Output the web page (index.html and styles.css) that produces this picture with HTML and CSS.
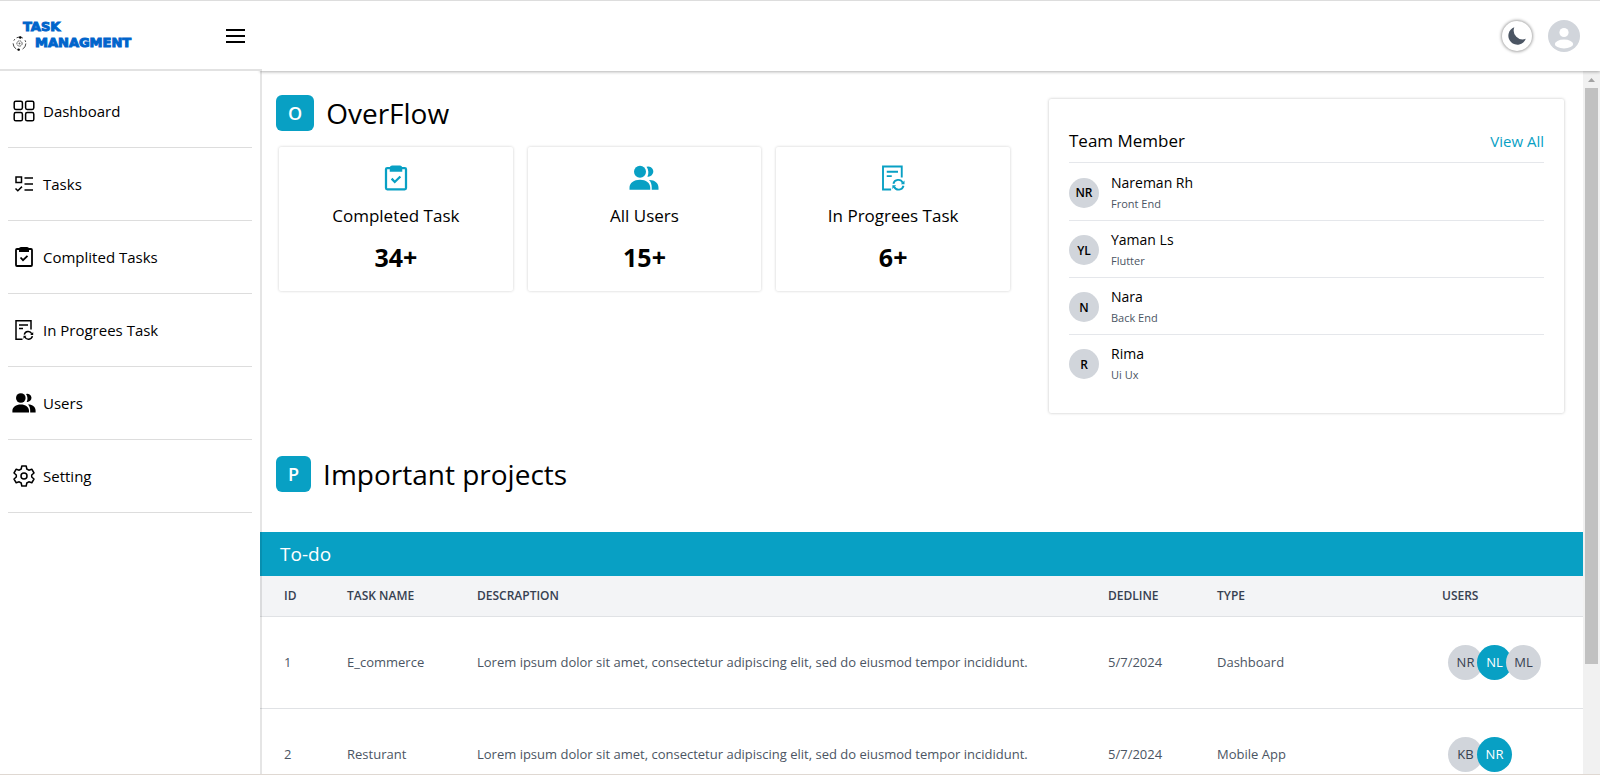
FILE: index.html
```html
<!DOCTYPE html>
<html lang="en">
<head>
<meta charset="utf-8">
<title>Task Managment</title>
<link rel="stylesheet" href="styles.css">
</head>
<body>
<svg class="sprite" aria-hidden="true">
  <symbol id="i-grid" viewBox="0 0 24 24"><g fill="none" stroke="currentColor" stroke-width="1.5"><rect x="2.2" y="2.2" width="8.2" height="8.2" rx="1.6"/><rect x="13.6" y="2.2" width="8.2" height="8.2" rx="1.6"/><rect x="2.2" y="13.6" width="8.2" height="8.2" rx="1.6"/><rect x="13.6" y="13.6" width="8.2" height="8.2" rx="1.6"/></g></symbol>
  <symbol id="i-tasks" viewBox="0 0 24 24"><g fill="none" stroke="currentColor" stroke-width="1.5"><rect x="4" y="5" width="5.5" height="5.5"/><path d="M12.5 6H21M12.5 12H21M12.5 18H21M3.5 16.5l2.3 2.3L10 14.6"/></g></symbol>
  <symbol id="i-clip" viewBox="0 0 24 24"><g fill="none" stroke="currentColor"><rect x="4" y="4" width="16" height="17" rx="1" stroke-width="1.8"/><path d="M8.5 12.5l2.500 2.700 4.500-4.400" stroke-width="1.800"/></g><path fill="currentColor" d="M7 4a2 2 0 0 1 2-2h6a2 2 0 0 1 2 2v3H7z"/></symbol>
  <symbol id="i-progress" viewBox="0 0 24 24"><g fill="none" stroke="currentColor" stroke-width="1.5"><path d="M10.500 21.200H4V2.800h15v8.700M7 7h9M7 10.500h4"/><path d="M12.300 16.600a4 4 0 0 1 7.500-.8M20.400 18.200a4 4 0 0 1-7.500.8"/></g><path fill="currentColor" d="M21.200 14v3h-3zM11.500 20.800v-3h3z"/></symbol>
  <symbol id="i-users" viewBox="0 0 24 24"><g fill="currentColor"><circle cx="8.800" cy="7" r="4.800"/><path d="M.4 21.400v-1.700C.4 16 4 13.400 8.800 13.400s8.200 2.600 8.200 6.300v1.700zM14 3a4.100 4.100 0 1 1 .7 7.900c1.300-2.300 1-5.700-.7-7.900zM16 13.600c4.400-.2 7.600 2.400 7.600 6.100v1.700h-5.400v-1.700c0-2.400-.6-4.600-2.200-6.100z"/></g></symbol>
  <symbol id="i-gear" viewBox="0 0 24 24"><g fill="none" stroke="currentColor" stroke-width="1.500" stroke-linejoin="round"><circle cx="12" cy="12" r="3"/><path d="M9.800 2h4.400l.6 3 2 1.200 3-1 2.200 3.800-2.300 2v2l2.300 2-2.200 3.800-3-1-2 1.200-.6 3H9.800l-.6-3-2-1.200-3 1L2 15l2.300-2v-2L2 9l2.200-3.800 3 1 2-1.200z"/></g></symbol>
</svg>
<div class="app">
  <aside class="sidebar">
    <div class="brand">
      <div class="logo">
        <span class="logo-top">Task</span>
        <span class="logo-bottom">
          <svg class="logo-mark" viewBox="0 0 16 16"><g fill="none" stroke="#222"><circle cx="8" cy="8" r="6.800" stroke-width=".9" stroke-dasharray="7 3 2 2"/><circle cx="8" cy="8" r="2.800" stroke-width=".8" stroke-dasharray="2 .6"/></g><circle cx="8" cy="8" r="1" fill="#666"/><circle cx="8.800" cy="1.500" r="1.300"/><circle cx="7" cy="14.500" r="1.300"/></svg>
          <span>Managment</span>
        </span>
      </div>
      <button class="menu-btn" type="button" aria-label="Toggle menu"><svg viewBox="0 0 20 14"><path d="M0 1h19M0 7h19M0 13h19" stroke="#000" stroke-width="2"/></svg></button>
    </div>
    <nav class="nav">
      <a href="#"><svg><use href="#i-grid"/></svg>Dashboard</a>
      <a href="#"><svg><use href="#i-tasks"/></svg>Tasks</a>
      <a href="#"><svg><use href="#i-clip"/></svg>Complited Tasks</a>
      <a href="#"><svg><use href="#i-progress"/></svg>In Progrees Task</a>
      <a href="#"><svg><use href="#i-users"/></svg>Users</a>
      <a href="#"><svg><use href="#i-gear"/></svg>Setting</a>
    </nav>
  </aside>
  <div class="page">
    <header class="topbar">
      <button class="theme-btn" type="button" aria-label="Dark mode"><svg viewBox="0 0 20 20"><path fill="#4b5563" d="M7.300 1.200A9 9 0 1 0 18.800 12.800 9 9 0 0 1 7.300 1.200z"/></svg></button>
      <button class="profile-btn" type="button" aria-label="Profile"><svg viewBox="0 0 32 32"><circle cx="16" cy="16" r="16" fill="#d1d5db"/><circle cx="16" cy="12.500" r="4.600" fill="#fff"/><ellipse cx="16" cy="24" rx="9.200" ry="4.400" fill="#fff"/></svg></button>
    </header>
    <div class="viewport">
      <main class="content">
        <section class="top">
          <div class="overview">
            <h1 class="heading"><span class="badge">O</span>OverFlow</h1>
            <div class="stats">
              <article class="stat"><svg><use href="#i-clip"/></svg><h2>Completed Task</h2><p>34+</p></article>
              <article class="stat"><svg><use href="#i-users"/></svg><h2>All Users</h2><p>15+</p></article>
              <article class="stat"><svg><use href="#i-progress"/></svg><h2>In Progrees Task</h2><p>6+</p></article>
            </div>
          </div>
          <aside class="team">
            <div class="team-head"><h2>Team Member</h2><a href="#">View All</a></div>
            <ul>
              <li><span class="avatar">NR</span><div><h3>Nareman Rh</h3><p>Front End</p></div></li>
              <li><span class="avatar">YL</span><div><h3>Yaman Ls</h3><p>Flutter</p></div></li>
              <li><span class="avatar">N</span><div><h3>Nara</h3><p>Back End</p></div></li>
              <li><span class="avatar">R</span><div><h3>Rima</h3><p>Ui Ux</p></div></li>
            </ul>
          </aside>
        </section>
        <section class="projects">
          <h1 class="heading"><span class="badge">P</span>Important projects</h1>
          <h2 class="banner">To-do</h2>
          <table>
            <colgroup><col class="c-id"><col class="c-name"><col><col class="c-date"><col class="c-type"><col class="c-users"></colgroup>
            <thead><tr><th>ID</th><th>Task name</th><th>Descraption</th><th>Dedline</th><th>Type</th><th>Users</th></tr></thead>
            <tbody>
              <tr><td>1</td><td>E_commerce</td><td>Lorem ipsum dolor sit amet, consectetur adipiscing elit, sed do eiusmod tempor incididunt.</td><td>5/7/2024</td><td>Dashboard</td><td><div class="people"><span>NR</span><span class="on">NL</span><span>ML</span></div></td></tr>
              <tr><td>2</td><td>Resturant</td><td>Lorem ipsum dolor sit amet, consectetur adipiscing elit, sed do eiusmod tempor incididunt.</td><td>5/7/2024</td><td>Mobile App</td><td><div class="people"><span>KB</span><span class="on">NR</span></div></td></tr>
            </tbody>
          </table>
        </section>
      </main>
      <div class="scroll" aria-hidden="true"><span class="scroll-up"></span><span class="scroll-thumb"></span></div>
    </div>
  </div>
</div>
</body>
</html>
```
FILE: styles.css
```css
* { box-sizing: border-box; margin: 0; padding: 0; }
body { font-family: "Open Sans", "Noto Sans", sans-serif; font-size: 15px; color: #000; background: #fff; }
a { color: inherit; text-decoration: none; }
button { border: 0; background: none; cursor: pointer; }
ul { list-style: none; }
h1, h2, h3 { font-weight: 400; }
svg { display: block; flex: none; }
.sprite { position: absolute; width: 0; height: 0; }

.app { display: flex; height: 100vh; overflow: hidden; border-top: 1px solid #ddd; border-bottom: 1px solid #dfd8d2; }

.sidebar { position: relative; z-index: 2; flex: none; width: 262px; margin-right: -2px; display: flex; flex-direction: column; }
.brand { display: flex; align-items: center; justify-content: space-between; height: 70px; padding: 0 16px 0 12px; border-bottom: 2px solid #e2e2e2; background: #fff; }
.logo { color: #0064cb; font-family: "DejaVu Sans", sans-serif; font-weight: 700; font-size: 13px; line-height: 16px; text-transform: uppercase; -webkit-text-stroke: 1px #0064cb; }
.logo-top { display: block; padding-left: 11px; }
.logo-bottom { display: flex; align-items: center; gap: 8px; }
.logo-mark { width: 15px; height: 15px; }
.menu-btn { padding-top: 2px; }
.menu-btn svg { width: 20px; height: 14px; }
.nav { flex: 1; padding: 4px 8px; border-right: 2px solid rgba(0, 0, 0, .1); }
.nav a { display: flex; align-items: center; gap: 7px; height: 73px; padding-left: 4px; border-bottom: 1px solid #ddd; }
.nav svg { width: 24px; height: 24px; }

.page { flex: 1; min-width: 0; display: flex; flex-direction: column; }
.topbar { position: relative; z-index: 1; flex: none; display: flex; align-items: center; justify-content: flex-end; gap: 16px; height: 70px; padding-right: 20px; background: #fff; box-shadow: 0 1px 3px rgba(0, 0, 0, .3); }
.theme-btn { display: grid; place-items: center; width: 30px; height: 30px; border-radius: 50%; box-shadow: 0 0 3px 1px rgba(0, 0, 0, .35); }
.theme-btn svg { width: 20px; height: 20px; }
.profile-btn svg { width: 32px; height: 32px; }

.viewport { flex: 1; min-height: 0; display: flex; }
.content { flex: 1; min-width: 0; overflow: hidden; }
.scroll { flex: none; width: 17px; padding: 0 2px; background: #f1f1f1; }
.scroll-up { display: block; width: 7px; height: 4px; margin: 7px auto 6px 3px; background: #a3a3a3; clip-path: polygon(50% 0, 100% 100%, 0 100%); }
.scroll-thumb { display: block; height: 82%; background: #c1c1c1; }

.heading { display: flex; align-items: center; gap: 12px; height: 36px; font-size: 28px; }
.badge { padding: 0 12px; border-radius: 6px; background: #08a0c4; color: #fff; font-size: 18px; font-weight: 600; line-height: 36px; }
.top { display: flex; align-items: flex-start; justify-content: space-between; padding: 24px 19px 0 16px; }
.overview { flex: 0 1 734px; }
.stats { display: grid; grid-template-columns: repeat(3, 1fr); gap: 15px; padding: 16px 0 0 3px; }
.stat { display: flex; flex-direction: column; align-items: center; padding: 16px 8px; border-radius: 2px; box-shadow: 0 0 3px rgba(0, 0, 0, .2); }
.stat svg { width: 30px; height: 30px; color: #08a0c4; }
.stat h2 { margin-top: 11px; font-size: 17px; line-height: 24px; }
.stat p { margin-top: 11px; font-size: 25px; font-weight: 700; line-height: 36px; }

.team { flex: 0 1 515px; margin-top: 4px; padding: 22px 20px; border-radius: 2px; box-shadow: 0 0 3px rgba(0, 0, 0, .25); }
.team-head { display: flex; align-items: center; justify-content: space-between; height: 42px; padding-bottom: 2px; border-bottom: 1px solid #e5e7eb; }
.team-head h2 { font-size: 17px; }
.team-head a { color: #08a0c4; }
.team li { display: flex; align-items: center; gap: 12px; height: 57px; padding-top: 2px; }
.team li + li { border-top: 1px solid #e5e7eb; }
.avatar { display: grid; place-items: center; width: 30px; height: 30px; border-radius: 50%; background: #d1d5db; font-size: 12px; font-weight: 600; }
.team h3 { font-size: 14px; line-height: 22px; }
.team p { color: #4b5563; font-size: 11px; line-height: 20px; }

.projects .heading { margin: 43px 16px 40px; }
.banner { padding-left: 20px; background: #08a0c4; color: #fff; font-size: 19px; line-height: 44px; }
table { width: 100%; table-layout: fixed; border-collapse: collapse; color: #4b5563; font-size: 13px; }
.c-id { width: 63px; }
.c-name { width: 130px; }
.c-date { width: 109px; }
.c-type { width: 225px; }
.c-users { width: 165px; }
th, td { padding-left: 24px; text-align: left; white-space: nowrap; border-bottom: 1px solid #e0e2e5; }
th { height: 40px; background: #f3f4f6; color: #374151; font-size: 12px; font-weight: 600; text-transform: uppercase; }
td { height: 92px; }
.people { display: flex; padding-left: 6px; }
.people span { display: grid; place-items: center; flex: none; width: 35px; height: 35px; border-radius: 50%; background: #d1d5db; color: #374151; }
.people span + span { margin-left: -6px; }
.people .on { background: #08a0c4; color: #fff; }
```
